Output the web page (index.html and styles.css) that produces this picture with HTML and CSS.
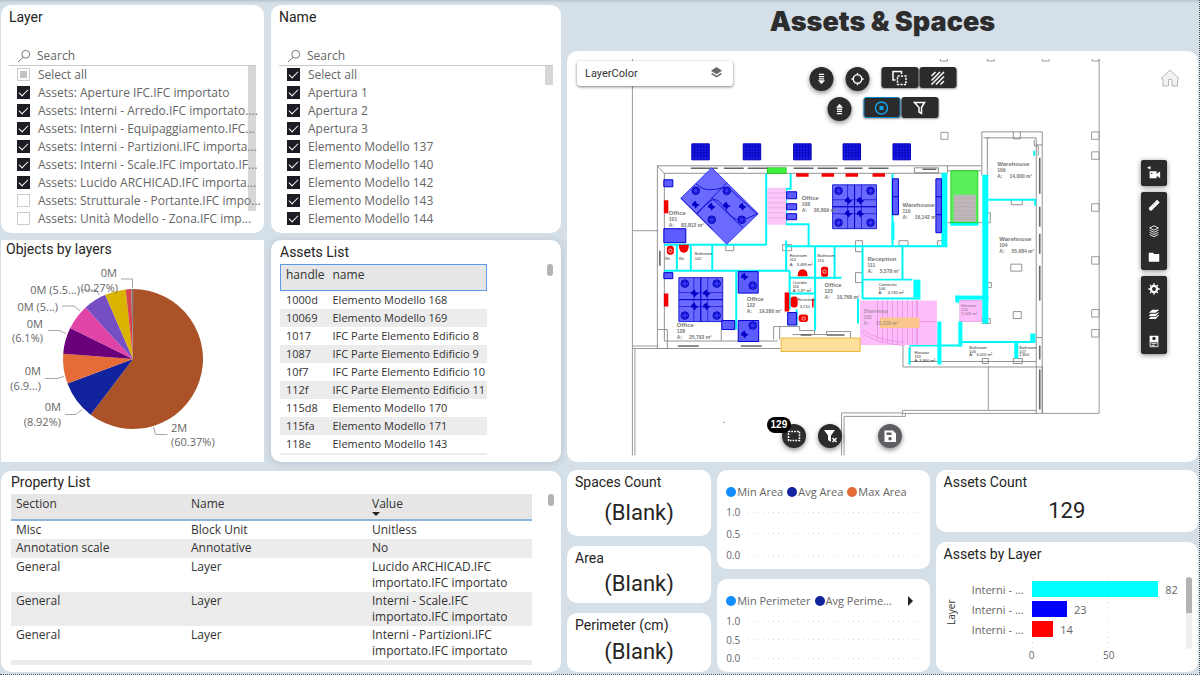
FILE: index.html
```html
<!DOCTYPE html>
<html lang="en">
<head>
  <meta charset="UTF-8" />
  <meta name="viewport" content="width=device-width, initial-scale=1.0"/>
  <title>Assets &amp; Spaces</title>
  <link rel="stylesheet" href="styles.css">
</head>
<body>

<main class="report">
  <div class="left">
    <section class="card slicer">
      <h2>Layer</h2>
      <div class="search">
        <svg viewBox="0 0 16 16"><circle cx="10" cy="6" r="4.5"/><path d="M7 9.5L1 15"/></svg>
        <input type="text" placeholder="Search" aria-label="Search layers">
      </div>
      <div class="options">
        <label><input type="checkbox" class="partial"> Select all</label>
        <label><input type="checkbox" checked> Assets: Aperture IFC.IFC importato</label>
        <label><input type="checkbox" checked> Assets: Interni - Arredo.IFC importato....</label>
        <label><input type="checkbox" checked> Assets: Interni - Equipaggiamento.IFC...</label>
        <label><input type="checkbox" checked> Assets: Interni - Partizioni.IFC importa...</label>
        <label><input type="checkbox" checked> Assets: Interni - Scale.IFC importato.IF...</label>
        <label><input type="checkbox" checked> Assets: Lucido ARCHICAD.IFC importa...</label>
        <label><input type="checkbox"> Assets: Strutturale - Portante.IFC impo...</label>
        <label><input type="checkbox"> Assets: Unità Modello - Zona.IFC imp...</label>
        <span class="thumb thumb-long"></span>
      </div>
    </section>

    <section class="card slicer">
      <h2>Name</h2>
      <div class="search">
        <svg viewBox="0 0 16 16"><circle cx="10" cy="6" r="4.5"/><path d="M7 9.5L1 15"/></svg>
        <input type="text" placeholder="Search" aria-label="Search names">
      </div>
      <div class="options">
        <label><input type="checkbox" checked> Select all</label>
        <label><input type="checkbox" checked> Apertura 1</label>
        <label><input type="checkbox" checked> Apertura 2</label>
        <label><input type="checkbox" checked> Apertura 3</label>
        <label><input type="checkbox" checked> Elemento Modello 137</label>
        <label><input type="checkbox" checked> Elemento Modello 140</label>
        <label><input type="checkbox" checked> Elemento Modello 142</label>
        <label><input type="checkbox" checked> Elemento Modello 143</label>
        <label><input type="checkbox" checked> Elemento Modello 144</label>
        <span class="thumb"></span>
      </div>
    </section>

    <section class="card pie">
      <h2>Objects by layers</h2>
      <svg viewBox="1 257 263 205">
        <path fill="#ab5228" d="M133 359V289A70 70 0 1 1 90.6 414.7Z"/>
        <path fill="#12239e" d="M133 359L90.6 414.7A70 70 0 0 1 67.5 383.6Z"/>
        <path fill="#e66c37" d="M133 359L67.5 383.6A70 70 0 0 1 63.2 353.8Z"/>
        <path fill="#6b007b" d="M133 359L63.2 353.8A70 70 0 0 1 70.2 328.1Z"/>
        <path fill="#e044a7" d="M133 359L70.2 328.1A70 70 0 0 1 85.6 307.5Z"/>
        <path fill="#744ec2" d="M133 359L85.6 307.5A70 70 0 0 1 105.2 294.8Z"/>
        <path fill="#d9b300" d="M133 359L105.2 294.8A70 70 0 0 1 125.7 289.4Z"/>
        <path fill="#d64550" d="M133 359L125.7 289.4A70 70 0 0 1 131.3 289Z"/>
        <path fill="#8a7a7a" d="M133 359L131.3 289H133.4Z"/>
        <g class="leader">
          <path d="M121 279h11.500v9"/>
          <path d="M81 290h15l3 5"/>
          <path d="M62 306h12l6 5"/>
          <path d="M48 330.500h11l7 3"/>
          <path d="M45 378.500h12l7-2"/>
          <path d="M65 414.500h11l6-5"/>
          <path d="M153.500 427l2 7.500h12"/>
        </g>
        <g class="pie-label">
          <text x="117" y="277" text-anchor="end">0M</text>
          <text x="118" y="292" text-anchor="end">(0.27%)</text>
          <text x="80" y="294" text-anchor="end">0M (5.5...)</text>
          <text x="58" y="311" text-anchor="end">0M (5...)</text>
          <text x="43" y="328" text-anchor="end">0M</text>
          <text x="43" y="342" text-anchor="end">(6.1%)</text>
          <text x="41" y="375" text-anchor="end">0M</text>
          <text x="41" y="390" text-anchor="end">(6.9...)</text>
          <text x="61" y="411" text-anchor="end">0M</text>
          <text x="61" y="426" text-anchor="end">(8.92%)</text>
          <text x="171" y="432">2M</text>
          <text x="171" y="446">(60.37%)</text>
        </g>
      </svg>
    </section>

    <section class="card assets">
      <h2>Assets List</h2>
      <div class="scroll">
        <table>
          <thead><tr><th>handle</th><th>name</th></tr></thead>
          <tbody>
            <tr><td>1000d</td><td>Elemento Modello 168</td></tr>
            <tr><td>10069</td><td>Elemento Modello 169</td></tr>
            <tr><td>1017</td><td>IFC Parte Elemento Edificio 8</td></tr>
            <tr><td>1087</td><td>IFC Parte Elemento Edificio 9</td></tr>
            <tr><td>10f7</td><td>IFC Parte Elemento Edificio 10</td></tr>
            <tr><td>112f</td><td>IFC Parte Elemento Edificio 11</td></tr>
            <tr><td>115d8</td><td>Elemento Modello 170</td></tr>
            <tr><td>115fa</td><td>Elemento Modello 171</td></tr>
            <tr><td>118e</td><td>Elemento Modello 143</td></tr>
            <tr><td></td><td></td></tr>
          </tbody>
        </table>
        <span class="grip"></span>
      </div>
    </section>

    <section class="card properties">
      <h2>Property List</h2>
      <div class="scroll">
        <table>
          <thead><tr><th>Section</th><th>Name</th><th class="sorted">Value</th></tr></thead>
          <tbody>
            <tr><td>Misc</td><td>Block Unit</td><td>Unitless</td></tr>
            <tr><td>Annotation scale</td><td>Annotative</td><td>No</td></tr>
            <tr><td>General</td><td>Layer</td><td>Lucido ARCHICAD.IFC<br>importato.IFC importato</td></tr>
            <tr><td>General</td><td>Layer</td><td>Interni - Scale.IFC<br>importato.IFC importato</td></tr>
            <tr><td>General</td><td>Layer</td><td>Interni - Partizioni.IFC<br>importato.IFC importato</td></tr>
            <tr><td></td><td></td><td></td></tr>
          </tbody>
        </table>
        <span class="grip"></span>
      </div>
    </section>
  </div>

  <div class="right">
    <h1>Assets &amp; Spaces</h1>

    <section class="card viewer">
      <svg class="plan" viewBox="568 51 630 412">
        <defs>
          <g id="chair"><circle r="3.800" fill="#3a3af5" stroke="#0000b4"/><path d="M-2-2h4v4h-4z" fill="none" stroke="#0000c8" stroke-width=".7"/></g>
          <g id="stool"><path d="M-3-2L0-4L1-1L4 0L1 2L0 4L-2 1L-4 1Z" fill="#0000c8"/></g>
          <g id="desks">
            <path d="M0 0h22v22H0zM22 0h22v22H22zM0 22h22v22H0zM22 22h22v22H22z" fill="#6a6aff" stroke="#0000c8" stroke-width=".8"/>
            <path d="M15 0v44M29 0v44M0 15h44M0 29h44" fill="none" stroke="#0000c8" stroke-width=".6"/>
            <use href="#chair" x="6" y="6"/><use href="#chair" x="38" y="6"/>
            <use href="#chair" x="6" y="38"/><use href="#chair" x="38" y="38"/>
            <use href="#stool" x="16" y="16"/><use href="#stool" x="28" y="16"/>
            <use href="#stool" x="16" y="29"/><use href="#stool" x="28" y="29"/>
          </g>
          <g id="unit">
            <path d="M0 0h17.500v16H0z" fill="#1a1aee" stroke="#0000b4"/>
            <path d="M3 0v16M6 0v16M9 0v16M12 0v16M15 0v16M0 3h17M0 6h17M0 9h17M0 12h17" stroke="#0000a0" stroke-width=".6"/>
          </g>
        </defs>

        <!-- site boundary -->
        <g class="site">
          <path d="M632.500 59v397M635 349v107M1100 59v355H903M632.500 231H658M632.500 346.500H658M632.500 349H658"/>
          <path d="M903 411v5M903 411h134M842 456v-42.500h61M844.500 456v-39H906v-3M989 367v44.500M1043 367v47"/>
          <path d="M941 59v2h7v-2M988 59v2h7v-2M1043 59v2h7v-2M1093 59v2h7v-2"/>
          <path d="M941.500 132.500h7v7h-7zM1092.500 132h7.500v7.500h-7.500zM1092.500 152h7.500v7.500h-7.500zM1092.500 204h7.500v7.500h-7.500zM1092.500 257h7.500v7.500h-7.500zM1092.500 310h7.500v7.500h-7.500zM1092.500 330h7.500v7.500h-7.500z"/>
        </g>
        <circle cx="724" cy="423" r=".7" fill="#777"/>

        <!-- outer walls and windows -->
        <g class="wall">
          <path d="M657.500 166H982M664.500 173.500H948M657.500 166V349M664.500 173.500V341.500M657.500 349H781M664.500 341.500H778M657.500 166l7 8M657.500 330h10v19M721.500 330v11.500"/>
          <path d="M982.500 176V132h60.500v282M988 176v-38h49v276M984 138h6M903.500 346v21.500H1043M910.500 347v18M910 362h127M1037 145h6M1037 338h6M948 171h34M948 223h35M948 166v7"/>
          <path d="M774 340v-13h26v4h15v4M793 335h34v-3h24v11M780 327v13M1035 140v6h4v10M1012 200v5h11v-5M1014 132v7h7v-7"/>
          <path d="M856 241h7v11h-7zM899.500 241h9v5h-9zM938 241h8v5h-8zM783 245h9v6h-9zM726 245h8v6h-8zM856 273h7v10h-7zM987 213h4v10h-4zM984 283h8v5h-8zM1011.500 264.500h11v7h-11zM1014 312h8v7h-8zM983 319h8v5h-8zM983 359h6v5h-6zM1014 359h9v5h-9zM915 168h24v5h-24z"/>
        </g>
        <g class="window">
          <path d="M691 168.500h27M724 168.500h20M748 168.500h20M794 168.500h20M818 168.500h20M845 168.500h18M869 168.500h20M923 169.500h14"/>
          <path d="M678 346.500h21M741 346.500h21M801 335.500h11M827 335.500h18M660 251v15M1040.500 158v36M1040.500 207v20M1040.500 234v20M1040.500 266v35M1040.500 346v14M1040.500 370v40"/>
        </g>

        <!-- partitions -->
        <g class="partition">
          <path d="M664 245h103M766.500 174v71M791 174v15h-4.500V224.500H809V246M787 246.500h161M786.500 241v29M664 271h126M712.500 245v26M677 245v26M691 245v26M736.500 271v59M790 271v39M790 278h52M815.500 246v85M835 246v32M790 294h25M797 310v16"/>
          <path d="M863 246v53M858.500 299v25M893 174v72M863 280h50M903 246v34M863 299h58M910 346h52M961 321v25M960 342.500h76M989 200h47v6M1035 335v8M1035 151v5M910 348v17"/>
        </g>
        <g fill="#0ff">
          <rect x="942" y="173" width="6" height="74"/>
          <rect x="983" y="175" width="6" height="149"/>
          <rect x="951" y="222" width="28" height="4"/>
          <rect x="914" y="280" width="7" height="18"/>
          <rect x="956" y="296" width="33" height="4"/>
          <rect x="956" y="296" width="4" height="7"/>
          <rect x="938" y="322" width="4" height="43"/>
          <rect x="959" y="322" width="4" height="25"/>
          <rect x="1015" y="343" width="4" height="16"/>
          <rect x="1031" y="334" width="5" height="9"/>
          <rect x="892" y="222" width="3" height="18"/>
        </g>

        <!-- stairs and lifts -->
        <rect x="767.500" y="168" width="19" height="5.500" fill="#3ef03e" stroke="#0a0"  stroke-width=".6"/>
        <rect x="767.500" y="188" width="19" height="37" fill="#fbc6f8"/>
        <path d="M767 193h19M767 198h19M767 203h19M767 208h19M767 213h19M767 218h19" stroke="#e9a4e4" stroke-width=".7"/>
        <rect x="951.500" y="171" width="27" height="52" fill="#5aee5a" stroke="#1c1" stroke-width=".8"/>
        <rect x="954.500" y="195" width="22" height="27" fill="#b9b9b9"/>
        <path d="M954 199h22M954 203h22M954 207h22M954 211h22M954 215h22M954 219h22" stroke="#d08fa8" stroke-width=".5"/>
        <rect x="860.500" y="301" width="77" height="44.500" fill="#fdbdfa"/>
        <g fill="none" stroke="#e88fe2" stroke-width=".8">
          <path d="M861 332q14 12 44 14M863 330q14 11 42 13M883 301v41M888 301v42M893 301v43M898 301v44M903 301v44M908 301v44M913 301v44M918 301v44M878 301v39M918 322h19M917 301v44"/>
        </g>
        <rect x="960.500" y="301" width="21.500" height="21" fill="#fdbdfa" stroke="#d88fd4" stroke-width=".6"/>
        <rect x="880.500" y="318" width="39.500" height="10.500" fill="#fbc58e"/>
        <rect x="781.500" y="338.500" width="79" height="13.500" fill="#fee09a" stroke="#e9b93c"/>

        <!-- furniture -->
        <use href="#unit" x="692" y="144"/><use href="#unit" x="743.500" y="144"/><use href="#unit" x="794" y="144"/><use href="#unit" x="843.500" y="144"/><use href="#unit" x="893.500" y="144"/>
        <path d="M712 168L758.500 214L727 244.500L681 198.500Z" fill="#6a6aff" stroke="#3a3aff"/>
        <g fill="none" stroke="#0000c8" stroke-width=".8">
          <path d="M681 198.500L697 214L727 183M697 214q8-9 14-13t12 5l7 9q7 7 14 5l14-6M696 184q7 6 12 6t11-1q7-3 13 2l25 23M712 198L743 228M697 214l16 16"/>
        </g>
        <use href="#chair" x="696" y="191"/><use href="#chair" x="727" y="191"/><use href="#chair" x="712" y="220"/><use href="#chair" x="742" y="220"/>
        <use href="#stool" x="696" y="205"/><use href="#stool" x="712" y="207"/><use href="#stool" x="727" y="206"/><use href="#stool" x="743" y="207"/>
        <use href="#desks" x="679" y="278"/>
        <use href="#desks" x="833" y="185"/>
        <g class="blue">
          <path d="M664 180h9v7h-9zM664 229h22v14h-22zM664 273h9v6h-9zM722 321h13v9h-13zM738.500 272h20v21.500h-20zM738.500 321h20.500v21h-20.500zM788 313h9v12.500h-9zM787 192h10v7h-10zM787 204h10v6h-10zM787 214h10v6h-10z"/>
          <path d="M893 179h6v36h-6zM936.500 179h5.500v54h-5.500zM893 197h6M936.500 197h5.500M936.500 215h5.500"/>
        </g>
        <use href="#stool" x="745" y="277"/><use href="#chair" x="753" y="286"/>
        <use href="#chair" x="753" y="326"/><use href="#stool" x="745" y="335"/>
        <g fill="#f40000">
          <path d="M664 200.500h4.500v13H664zM664 294h4.500v13H664zM796.500 173.500H809v3.500h-12.500zM822 173.500h12.500v3.500H822zM846 173.500h12.500v3.500H846zM873 173.500h12.500v3.500H873zM785 293h4.500v19H785zM812.500 299h1.500v9h-1.500z"/>
          <rect x="667" y="246" width="7" height="9" rx="3"/>
          <path d="M679 245h10q0 8-5 8t-5-8zM798 276.500q0-7 5-7t5 7z"/>
          <rect x="821.500" y="267" width="7" height="10" rx="2"/>
          <rect x="791" y="297" width="7" height="11" rx="3"/>
          <rect x="799" y="315" width="9.500" height="7.500" rx="3"/>
        </g>
        <g fill="none" stroke="#fff" stroke-width=".7"><circle cx="670.500" cy="251" r="1.700"/><circle cx="825" cy="272" r="1.700"/><circle cx="804" cy="319" r="1.700"/></g>

        <!-- room names -->
        <g class="room">
          <text x="669" y="215">Office</text><text class="sub" x="669" y="221">101</text><text class="sub" x="669" y="227">A: &#160; &#160; 83,812 m²</text>
          <text x="802" y="200">Office</text><text class="sub" x="802" y="206">108</text><text class="sub" x="802" y="212">A: &#160; &#160; 30,809 m²</text>
          <text x="677" y="327">Office</text><text class="sub" x="677" y="333">128</text><text class="sub" x="677" y="339">A: &#160; &#160; 25,793 m²</text>
          <text x="747" y="301">Office</text><text class="sub" x="747" y="307">122</text><text class="sub" x="747" y="313">A: &#160; &#160; 19,280 m²</text>
          <text x="825" y="287">Office</text><text class="sub" x="825" y="293">123</text><text class="sub" x="825" y="299">A: &#160; &#160; 10,768 m²</text>
          <text x="903" y="207">Warehouse</text><text class="sub" x="903" y="213">110</text><text class="sub" x="903" y="219">A: &#160; &#160; 16,142 m²</text>
          <text x="998" y="166">Warehouse</text><text class="sub" x="998" y="172">109</text><text class="sub" x="998" y="178">A: &#160; &#160; 14,000 m²</text>
          <text x="1000" y="241">Warehouse</text><text class="sub" x="1000" y="247">104</text><text class="sub" x="1000" y="253">A: &#160; &#160; 55,684 m²</text>
          <text x="868" y="261">Reception</text><text class="sub" x="868" y="267">111</text><text class="sub" x="868" y="273">A: &#160; &#160; 5,578 m²</text>
          <text x="864" y="313" opacity=".6">Stairway</text><text class="sub" x="864" y="319" opacity=".6">105</text><text class="sub" x="864" y="325" opacity=".6">A: &#160; &#160; 15,110 m²</text>
        </g>
        <g class="room small">
          <text x="879" y="286">Connector</text><text x="879" y="290">106</text><text x="879" y="294">A: &#160; &#160; 4,740 m²</text>
          <text x="790" y="257">Restroom</text><text x="790" y="261">114</text><text x="790" y="266">A: &#160; 3,489 m²</text>
          <text x="818" y="257">Bathroom</text><text x="818" y="262">115</text>
          <text x="793" y="284">Corridor</text><text x="793" y="288">116</text><text x="793" y="292">A: 1,87 m²</text>
          <text x="798" y="301">Restroom</text><text x="800" y="308">3,210</text>
          <text x="695" y="255">Bathroom</text><text x="695" y="260">102</text>
          <text x="665" y="260">Wc</text><text x="679" y="260">Wc</text>
          <text x="915" y="355">Elevator</text><text x="915" y="359">119</text><text x="915" y="363">A: 3,860 m²</text>
          <text x="970" y="349">Bathroom</text><text x="970" y="353">106</text><text x="970" y="357">A: &#160; 6,000 m²</text>
          <text x="1020" y="349">Bathroom</text><text x="1020" y="353">107</text><text x="1020" y="357">1,800</text>
          <text x="962" y="307" opacity=".6">Elevator</text><text x="962" y="311" opacity=".6">120</text><text x="962" y="315" opacity=".6">3,000 m²</text>
        </g>
      </svg>

      <div class="layer-select">
        <select aria-label="Color by"><option>LayerColor</option></select>
        <svg viewBox="0 0 12 12"><path d="M6 0L12 4L6 8L0 4Z"/><path d="M1.500 6.500L0 7.500L6 11.500L12 7.500L10.500 6.500L6 9.500Z"/></svg>
      </div>

      <div class="tools">
        <div class="tool-row">
          <button class="round" aria-label="Move down"><svg viewBox="0 0 16 16"><path d="M5 2h6v1.500H5zM5 4.500h6V6H5zM5 7h6v1.500H5zM4 9.500h8L8 14z"/></svg></button>
          <button class="round" aria-label="Locate"><svg viewBox="0 0 16 16"><path class="line" d="M8 3a5 5 0 1 0 .01 0M8 1v3M8 12v3M1 8h3M12 8h3"/></svg></button>
          <div class="group">
            <button aria-label="Select overlapping"><svg viewBox="0 0 16 16"><path class="line" d="M4 10H1.500V1.500H10V4"/><path class="line" stroke-dasharray="2.200 1.200" d="M6 6h8.500v8.500H6z"/></svg></button>
            <button aria-label="Hatch"><svg viewBox="0 0 16 16"><path class="line" d="M2 6l4-4M2 10.500L10.500 2M2 14.500L14.500 2M6.500 14.500l8-8M11 14.500l3.500-3.500"/></svg></button>
          </div>
        </div>
        <div class="tool-row">
          <button class="round" aria-label="Move up"><svg viewBox="0 0 16 16"><path d="M4 6.500h8L8 2zM5 7.500h6V9H5zM5 10h6v1.500H5zM5 12.500h6V14H5z"/></svg></button>
          <div class="group">
            <button class="active" aria-label="Isolate"><svg viewBox="0 0 16 16"><circle class="line" cx="8" cy="8" r="6"/><path d="M6 6h4v4H6z"/></svg></button>
            <button aria-label="Filter"><svg viewBox="0 0 16 16"><path class="line" d="M3 2.500h10L10 7.500v6L7.500 12V7.500z"/></svg></button>
          </div>
        </div>
      </div>

      <a class="home" href="#" aria-label="Home"><svg viewBox="0 0 20 18"><path d="M10 1L19 9.500L17.500 10.500V17H12V10.500H8.500V17H3V10.500L1 9.500Z"/></svg></a>

      <div class="side">
        <div class="group">
          <button aria-label="Camera"><svg viewBox="0 0 16 16"><path d="M0 2l4-2v4zM3 6h8v8H3zM11 9l4-3v8l-4-3z"/><circle cx="5.500" cy="8.500" r=".9" fill="#2b2b2b"/></svg></button>
        </div>
        <div class="group">
          <button aria-label="Measure"><svg viewBox="0 0 16 16"><path d="M2 11.500L11.500 2L14.500 5L5 14.500Q2 15 2 11.500Z"/><path stroke="#2b2b2b" stroke-width=".7" d="M5 9l1 1M7 7l1 1M9 5l1 1"/></svg></button>
          <button aria-label="Levels"><svg viewBox="0 0 16 16"><path class="thin" d="M8 2L13 4.500L8 7L3 4.500ZM3 7l5 2.500L13 7M3 9.500L8 12l5-2.500M3 12l5 2.500L13 12"/></svg></button>
          <button aria-label="Files"><svg viewBox="0 0 16 16"><path d="M2 5V3h5l1 1.500h6v9H2z"/></svg></button>
        </div>
        <div class="group">
          <button aria-label="Settings"><svg viewBox="0 0 16 16"><circle cx="8" cy="8" r="3.500" fill="none" stroke="#fff" stroke-width="2.500"/><path class="line" d="M8 1.500v2M8 12.500v2M1.500 8h2M12.500 8h2M3.500 3.500l1.200 1.200M11.300 11.300l1.200 1.200M12.500 3.500l-1.200 1.200M4.700 11.300l-1.200 1.200"/></svg></button>
          <button aria-label="Layers"><svg viewBox="0 0 16 16"><path d="M6 2h8l-4 3.500H2zM4 6.500h1.500h5L12.500 5H14l-4 4H2zM4 10h6.500l2-2H14l-4 4.500H2z"/></svg></button>
          <button aria-label="Properties"><svg viewBox="0 0 16 16"><path d="M3 2h10v7H3z"/><path class="thin" d="M3.500 9h9v5.500h-9zM5 11h6M5 13h4"/><circle cx="8" cy="5" r="2" fill="#2b2b2b"/></svg></button>
        </div>
      </div>

      <div class="actions">
        <button class="round" aria-label="Selected items"><svg viewBox="0 0 16 16"><path class="line" stroke-dasharray="1.800 1" d="M2.500 3.500h11v9h-11z"/></svg><span class="badge">129</span></button>
        <button class="round" aria-label="Clear filter"><svg viewBox="0 0 16 16"><path d="M2 2h11L9 7.500V14L6 12V7.500z"/><path class="line" d="M10.500 10l4 4M14.500 10l-4 4"/></svg></button>
        <button class="round save" aria-label="Save"><svg viewBox="0 0 16 16"><path fill-rule="evenodd" d="M2.500 2.500H11L14 5.500V14H2.500zM4.500 4.500v2.500h5V4.500zM8 9a1.700 1.700 0 1 0 .01 0z"/></svg></button>
      </div>
    </section>

    <div class="stats">
      <div class="stack counts">
        <section class="card kpi"><h2>Spaces Count</h2><p>(Blank)</p></section>
        <section class="card kpi"><h2>Area</h2><p>(Blank)</p></section>
        <section class="card kpi"><h2>Perimeter (cm)</h2><p>(Blank)</p></section>
      </div>

      <div class="stack trends">
        <section class="card trend">
          <ul class="legend">
            <li class="min">Min Area</li>
            <li class="avg">Avg Area</li>
            <li class="max">Max Area</li>
          </ul>
          <div class="scale"><span>1.0</span><span>0.5</span><span>0.0</span></div>
        </section>
        <section class="card trend">
          <ul class="legend">
            <li class="min">Min Perimeter</li>
            <li class="avg">Avg Perime...</li>
            <li class="next"><button aria-label="Next"></button></li>
          </ul>
          <div class="scale"><span>1.0</span><span>0.5</span><span>0.0</span></div>
        </section>
      </div>

      <div class="stack totals">
        <section class="card kpi"><h2>Assets Count</h2><p>129</p></section>
        <section class="card bars">
          <h2>Assets by Layer</h2>
          <div class="chart">
            <span class="axis-name">Layer</span>
            <div class="names"><span>Interni - ...</span><span>Interni - ...</span><span>Interni - ...</span></div>
            <div class="plot">
              <div class="bar"><i class="cyan" style="width:82%"></i>82</div>
              <div class="bar"><i class="navy" style="width:23%"></i>23</div>
              <div class="bar"><i class="red" style="width:14%"></i>14</div>
              <div class="ticks"><span>0</span><span>50</span></div>
            </div>
            <span class="track"></span>
          </div>
        </section>
      </div>
    </div>
  </div>
</main>

</body>
</html>
```

FILE: styles.css
```css
* {
  box-sizing: border-box;
}
body {
  margin: 0;
  font-family: "Open Sans", "Noto Sans", sans-serif;
  font-size: 12px;
  color: #333;
  background: #d5dfe7;
}
h1, h2, p, ul {
  margin: 0;
  padding: 0;
}
h1 {
  padding-bottom: 12px;
  font-family: Inter, sans-serif;
  font-size: 27px;
  font-weight: 900;
  line-height: 34px;
  text-align: center;
  color: #2d2d2d;
}
h2, .kpi p {
  font-family: Roboto, sans-serif;
}
h2 {
  font-size: 14px;
  font-weight: 400;
  line-height: 16px;
  color: #252423;
}
button {
  padding: 0;
  border: none;
  cursor: pointer;
}
.report {
  height: 100vh;
  min-height: 640px;
  padding: 5px 1px 2px;
  display: grid;
  grid-template-columns: 560fr 631fr;
  gap: 6px;
  border-right: 1px dotted #555;
  border-bottom: 1px dotted #555;
  box-shadow: inset 0 3px 3px -2px #a9b8c4;
}
.card {
  background: #fff;
  border-radius: 10px;
  min-width: 0;
  min-height: 0;
  overflow: hidden;
}

/* left side */
.left {
  display: grid;
  grid-template-columns: 263fr 290fr;
  grid-template-rows: 228fr 222fr 203fr;
  gap: 7px;
  min-height: 0;
}
.slicer {
  padding: 4px 8px 6px;
  display: flex;
  flex-direction: column;
}
.search {
  display: flex;
  align-items: center;
  gap: 6px;
  margin-top: 21px;
  padding-left: 8px;
  border-bottom: 1px solid #c8c8c8;
}
.search svg {
  width: 14px;
  height: 14px;
  fill: none;
  stroke: #666;
}
.search input {
  flex: 1;
  min-width: 0;
  height: 19px;
  padding: 0;
  border: none;
  font: inherit;
}
.search input::placeholder {
  color: #666;
}
.options {
  flex: 1;
  display: grid;
  grid-auto-rows: 1fr;
  position: relative;
}
.options label {
  display: flex;
  align-items: center;
  gap: 8px;
  padding-left: 8px;
  color: #666;
  white-space: nowrap;
}
.options input {
  appearance: none;
  flex: none;
  width: 13px;
  height: 13px;
  margin: 0;
  border: 1px solid #ccc;
  background: #fff;
}
.options input:checked {
  border-color: #1c1c24;
  background: #1c1c24;
}
.options input:checked::before {
  content: "";
  display: block;
  width: 8px;
  height: 4px;
  margin: 2px 0 0 1px;
  border-left: 1px solid #fff;
  border-bottom: 1px solid #fff;
  transform: rotate(-45deg);
}
.options .partial {
  padding: 2px;
  background: #c4c4c4 content-box;
}
.thumb {
  position: absolute;
  top: 0;
  right: 0;
  width: 8px;
  height: 19px;
  background: rgba(160, 160, 160, .42);
}
.thumb-long {
  height: 90%;
}
.pie {
  display: flex;
  flex-direction: column;
  border-radius: 0;
}
.pie h2 {
  padding: 1px 5px 0;
}
.pie svg {
  flex: 1;
  min-height: 0;
  width: 100%;
}
.leader path {
  fill: none;
  stroke: #a6a6a6;
}
.pie-label {
  font-size: 11px;
  fill: #666;
}
.assets, .properties {
  display: flex;
  flex-direction: column;
}
.assets {
  padding: 4px 8px 7px 9px;
  box-shadow: 0 1px 9px #b9c4cf;
}
.properties {
  grid-column: span 2;
  margin-top: 2px;
  padding: 3px 7px 7px 10px;
}
.scroll {
  flex: 1;
  min-height: 0;
  display: flex;
  align-items: flex-start;
  justify-content: space-between;
  margin-top: 4px;
  overflow: hidden;
}
.grip {
  width: 6px;
  height: 12px;
  border-radius: 3px;
  background: #b3b3b3;
}
table {
  border-collapse: collapse;
}
th, td {
  text-align: left;
  vertical-align: top;
  font-weight: 400;
}
thead tr {
  background: #e6e6e6;
}
tbody tr:nth-child(even) {
  background: #ececec;
}
.assets table {
  font-size: 11px;
}
.assets th {
  height: 27px;
  padding: 2px 2px 2px 6px;
  font-size: 12px;
}
.assets thead tr {
  outline: 1px solid #5b9be6;
  outline-offset: -1px;
}
.assets td {
  height: 18px;
  padding: 1px 2px 0 6px;
  line-height: 16px;
  white-space: nowrap;
}
.properties table {
  width: 96%;
  table-layout: fixed;
}
.properties th {
  height: 26px;
  padding: 1px 5px;
  border-bottom: 2px solid #8fb4dc;
}
.properties th:nth-child(1) {
  width: 175px;
}
.properties th:nth-child(2) {
  width: 181px;
}
.properties td {
  height: 19px;
  padding: 1px 5px;
  line-height: 16px;
}
.sorted::after {
  content: "";
  display: block;
  width: 0;
  border: 4px solid transparent;
  border-top-color: #222;
  border-bottom: none;
}

/* right side */
.right {
  display: grid;
  grid-template-columns: minmax(0, 1fr);
  grid-template-rows: auto 412fr 202fr;
  row-gap: 8px;
  min-height: 0;
}
.right h1 {
  padding-bottom: 4px;
}
.viewer {
  position: relative;
}
.plan {
  display: block;
  width: 100%;
  height: 100%;
}
.site path, .wall path {
  fill: none;
  stroke: #9a9a9a;
  stroke-width: 1;
}
.wall path {
  stroke: #777;
  stroke-width: .8;
}
.window path {
  fill: none;
  stroke: #666;
  stroke-width: 1.6;
}
.partition path {
  fill: none;
  stroke: #00f6f6;
  stroke-width: 2;
}
.blue path {
  fill: #5c5cff;
  stroke: #0000d0;
}
.room {
  font-family: "Liberation Sans", Arial, sans-serif;
  font-size: 6px;
  font-weight: 700;
  fill: #777;
}
.room .sub {
  font-size: 5px;
}
.small {
  font-size: 4px;
  font-weight: 400;
  fill: #333;
}
.layer-select {
  position: absolute;
  top: 10px;
  left: 10px;
  width: 156px;
  height: 25px;
  background: #fff;
  border-radius: 3px;
  box-shadow: 0 1px 3px rgba(0, 0, 0, .5);
}
.layer-select select {
  appearance: none;
  width: 100%;
  height: 100%;
  padding: 0 8px;
  border: none;
  background: none;
  font-family: Roboto, sans-serif;
  font-size: 11px;
  color: #333;
}
.layer-select svg {
  position: absolute;
  top: 6px;
  right: 11px;
  width: 11px;
  height: 11px;
  fill: #666;
}
.tools {
  position: absolute;
  top: 16px;
  left: 50%;
  transform: translateX(-50%);
  display: flex;
  flex-direction: column;
  align-items: center;
  gap: 6px;
}
.tool-row {
  display: flex;
  gap: 12px;
}
.viewer button {
  position: relative;
  display: flex;
  align-items: center;
  justify-content: center;
  background: #2b2b2b;
}
.viewer button svg {
  width: 16px;
  height: 16px;
  fill: #fff;
}
.viewer .line, .viewer .thin {
  fill: none;
  stroke: #fff;
  stroke-width: 1.5;
}
.viewer .thin {
  stroke-width: 1;
}
.viewer .round {
  width: 24px;
  height: 24px;
  border-radius: 50%;
  box-shadow: 0 2px 5px rgba(0, 0, 0, .45);
}
.viewer .side svg, .tool-row .round svg {
  width: 14px;
  height: 14px;
}
.group {
  display: flex;
  gap: 1px;
  border-radius: 3px;
}
.group button {
  border-radius: 3px;
}
.tool-row .group button {
  width: 37px;
  height: 21px;
  box-shadow: 0 1px 2px rgba(0, 0, 0, .4);
}
.viewer .active {
  border: 1px solid #0d84c4;
}
.viewer .active svg {
  fill: #18a0e6;
}
.viewer .active .line {
  stroke: #18a0e6;
}
.home {
  position: absolute;
  top: 18px;
  right: 18px;
}
.home svg {
  display: block;
  width: 20px;
  height: 18px;
  fill: #f2f2f2;
  stroke: #b5b5b5;
}
.side {
  position: absolute;
  top: 109px;
  right: 31px;
  display: flex;
  flex-direction: column;
  gap: 6px;
}
.side .group {
  flex-direction: column;
  gap: 0;
  background: #2b2b2b;
  box-shadow: 0 1px 5px rgba(0, 0, 0, .5);
}
.side button {
  width: 26px;
  height: 26px;
}
.actions {
  position: absolute;
  bottom: 14px;
  left: 34%;
  display: flex;
  gap: 12px;
}
.viewer .save {
  margin-left: 24px;
  background: #5d5f65;
}
.badge {
  position: absolute;
  top: -7px;
  left: -15px;
  padding: 0 4px;
  border-radius: 8px;
  background: #000;
  color: #fff;
  font: 700 10px/16px "Liberation Sans", Arial, sans-serif;
}

.stats {
  display: grid;
  grid-template-columns: 144fr 212fr 262fr;
  gap: 6px;
  min-height: 0;
}
.stack {
  display: grid;
  grid-template-columns: minmax(0, 1fr);
  gap: 10px;
  min-width: 0;
  min-height: 0;
}
.counts {
  grid-template-rows: 65fr 57fr 59fr;
}
.trends {
  grid-template-rows: 98fr 92fr;
}
.totals {
  grid-template-rows: 62fr 130fr;
}
.kpi {
  padding: 4px 8px 0;
  display: flex;
  flex-direction: column;
}
.kpi p {
  flex: 1;
  display: flex;
  align-items: center;
  justify-content: center;
  font-size: 22px;
  line-height: 24px;
  color: #252423;
}
.trend {
  display: flex;
  flex-direction: column;
  gap: 5px;
  padding: 14px 7px 7px 9px;
}
.legend {
  display: flex;
  gap: 4px;
  list-style: none;
  font-size: 11px;
  line-height: 16px;
  color: #666;
  white-space: nowrap;
}
.legend li {
  display: flex;
  align-items: center;
  gap: 1px;
}
.legend li::before {
  content: "";
  width: 10px;
  height: 10px;
  border-radius: 50%;
}
.min::before {
  background: #118dff;
}
.avg::before {
  background: #12239e;
}
.max::before {
  background: #e66c37;
}
.legend .next {
  margin: 0 10px 0 auto;
}
.legend .next::before {
  content: none;
}
.next button {
  border: 5px solid transparent;
  border-left-color: #222;
  border-right: none;
  background: none;
}
.scale {
  flex: 1;
  display: flex;
  flex-direction: column;
  justify-content: space-between;
  font-size: 10px;
  line-height: 14px;
  color: #666;
}
.scale span {
  display: flex;
  align-items: center;
  gap: 8px;
}
.scale span::after {
  content: "";
  flex: 1;
  height: 1px;
  background: repeating-linear-gradient(90deg, #ddd 0 1px, transparent 1px 5px);
}
.bars {
  padding: 4px 6px 4px 8px;
  display: flex;
  flex-direction: column;
}
.chart {
  flex: 1;
  display: flex;
  padding-top: 15px;
  font-size: 11px;
  color: #666;
}
.axis-name {
  writing-mode: vertical-rl;
  transform: rotate(180deg);
  height: 70px;
  font-size: 10px;
  text-align: center;
  color: #333;
}
.names {
  width: 74px;
  padding-right: 8px;
  text-align: right;
}
.names span, .bar {
  display: flex;
  align-items: center;
  justify-content: flex-end;
  height: 16px;
  margin: 4px 0;
}
.plot {
  flex: 1;
  height: 72px;
  background:
    repeating-linear-gradient(#ddd 0 1px, transparent 1px 5px) 0 0 / 1px 100% no-repeat,
    repeating-linear-gradient(#ddd 0 1px, transparent 1px 5px) 50% 0 / 1px 100% no-repeat;
}
.bar {
  justify-content: flex-start;
  gap: 7px;
}
.bar i {
  height: 100%;
}
.cyan {
  background: #0ff;
}
.navy {
  background: #00f;
}
.red {
  background: #f00;
}
.ticks {
  display: grid;
  grid-template-columns: 1fr 1fr;
  padding-top: 7px;
  font-size: 10px;
}
.ticks span {
  justify-self: start;
  transform: translateX(-50%);
}
.track {
  width: 6px;
  height: 72px;
  border-radius: 3px;
  background: linear-gradient(#b3b3b3 50%, #eee 50%);
}
```
